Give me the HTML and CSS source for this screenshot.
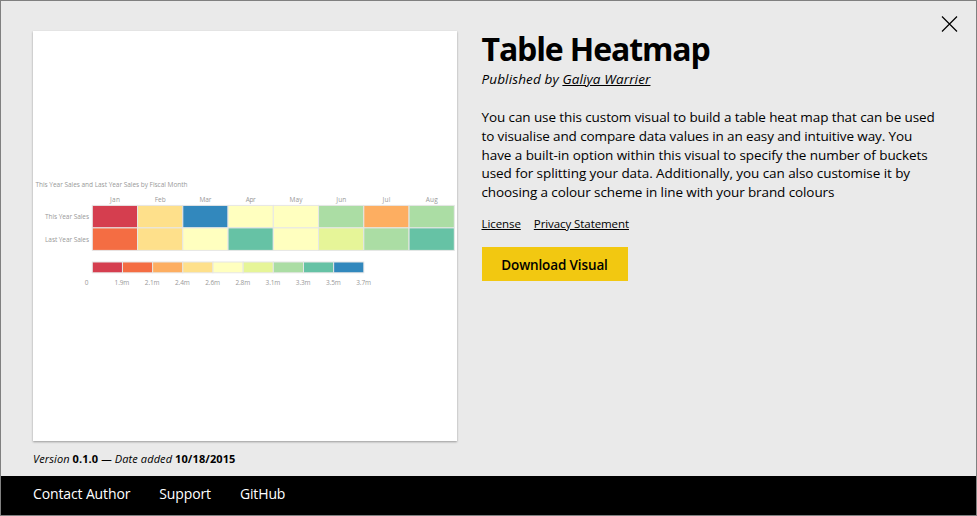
FILE: index.html
```html
<!DOCTYPE html>
<html lang="en">
<head>
<meta charset="utf-8">
<title>Table Heatmap</title>
<link rel="stylesheet" href="styles.css">
</head>
<body>
<div class="dialog">
  <main class="content">
    <section class="preview">
      <div class="card">
        <svg class="chart" viewBox="33 31 424 410" id="chart" role="img" aria-label="Table heatmap"></svg>
      </div>
      <p class="version"><i>Version</i> <b>0.1.0</b> <i>— Date added</i> <b>10/18/2015</b></p>
    </section>
    <section class="details">
      <h1>Table Heatmap</h1>
      <p class="publisher">Published by <a href="#">Galiya Warrier</a></p>
      <p class="description">You can use this custom visual to build a table heat map that can be used<br><span class="tight">to visualise and compare data values in an easy and intuitive way. You</span><br><span class="loose">have a built-in option within this visual to specify the number of buckets</span><br><span class="loose">used for splitting your data. Additionally, you can also customise it by</span><br>choosing a colour scheme in line with your brand colours</p>
      <p class="legal"><a href="#">License</a><a href="#">Privacy Statement</a></p>
      <a class="download" href="#">Download Visual</a>
    </section>
    <button class="close" aria-label="Close"><svg viewBox="0 0 16 16"><path d="M0 .5l15 15M15 .5l-15 15"/></svg></button>
  </main>
  <footer class="footer"><a href="#">Contact Author</a><a href="#">Support</a><a href="#">GitHub</a></footer>
</div>
<script src="chart.js"></script>
</body>
</html>
```
FILE: styles.css
```css
* { box-sizing: border-box; }
body { margin: 0; font-family: "Open Sans", "Segoe UI", sans-serif; color: #000; }
h1, p { margin: 0; }
a { color: inherit; }
.dialog { width: 977px; height: 516px; display: flex; flex-direction: column; background: #eaeaea; border: 1px solid #808080; overflow: hidden; }
.content { flex: 1; display: flex; gap: 24.5px; padding: 30px 32px 0; position: relative; }
.preview { width: 424px; }
.card { height: 410px; background: #fff; box-shadow: 0 1px 2px rgba(0,0,0,.35); }
.chart { display: block; width: 424px; height: 410px; }
.chart text { font-size: 6.5px; fill: #999; }
.version { margin-top: 9px; font-size: 11px; line-height: 18px; letter-spacing: .1px; white-space: nowrap; }
.details { flex: 1; white-space: nowrap; }
h1 { font-size: 32px; line-height: 36px; padding-bottom: 2px; font-weight: 700; letter-spacing: -1.13px; }
.publisher { font-size: 13.5px; line-height: 20px; font-style: italic; letter-spacing: .13px; }
.description { margin-top: 19px; font-size: 13.5px; line-height: 18.75px; letter-spacing: -.1px; }
.tight { letter-spacing: -.12px; }
.loose { letter-spacing: -.07px; }
.legal { display: flex; gap: 13px; margin-top: 13px; font-size: 11.5px; line-height: 18px; letter-spacing: -.08px; }
.download { display: flex; align-items: center; justify-content: center; width: 146px; height: 34px; margin-top: 14px; padding-top: 2px; background: #f2c811; font-size: 13.5px; font-weight: 600; letter-spacing: -.13px; text-decoration: none; }
.close { position: absolute; top: 15px; right: 18px; width: 16px; height: 16px; padding: 0; border: 0; background: none; }
.close svg { display: block; width: 16px; height: 16px; stroke: #000; stroke-width: 1.2; fill: none; overflow: visible; }
.footer { flex: none; height: 39px; display: flex; gap: 29px; padding-left: 32px; background: #000; color: #fff; font-size: 14px; line-height: 36px; letter-spacing: -.13px; }
.footer a { text-decoration: none; }
```
FILE: chart.js
```js
const colors = ["#d53e4f", "#f46d43", "#fdae61", "#fee08b", "#ffffbf", "#e6f598", "#abdda4", "#66c2a5", "#3288bd"];
const months = ["Jan", "Feb", "Mar", "Apr", "May", "Jun", "Jul", "Aug"];
const rows = [[0, 3, 8, 4, 4, 6, 2, 6], [1, 3, 4, 7, 4, 5, 6, 7]];
const ticks = ["1.9m", "2.1m", "2.4m", "2.6m", "2.8m", "3.1m", "3.3m", "3.5m", "3.7m"];
const text = (x, y, s, w, anchor = "start") => `<text x="${x}" y="${y}" text-anchor="${anchor}" textLength="${w}">${s}</text>`;
const cell = (x, y, w, h, c) => `<rect x="${x}" y="${y}" width="${w}" height="${h}" fill="${colors[c]}" stroke="#e6e6e6"/>`;
const widths = [10, 11, 12, 10, 13, 10, 8, 12];
let out = text(35.5, 187, "This Year Sales and Last Year Sales by Fiscal Month", 152);
months.forEach((m, i) => { out += text(115 + i * 45.25, 201.5, m, widths[i], "middle"); });
out += text(89, 218.5, "This Year Sales", 44, "end") + text(89, 241.5, "Last Year Sales", 44, "end");
rows.forEach((r, j) => r.forEach((c, i) => { out += cell(92.3 + i * 45.25, 205.4 + j * 22.5, 45.25, 22.5, c); }));
colors.forEach((c, i) => { out += cell(92.3 + i * 30.17, 262, 30.17, 10.8, i); });
out += text(86.5, 284.5, "0", 4, "middle");
ticks.forEach((t, i) => { out += text(122 + i * 30.2, 284.5, t, 14.8, "middle"); });
document.getElementById("chart").innerHTML = out;
```
